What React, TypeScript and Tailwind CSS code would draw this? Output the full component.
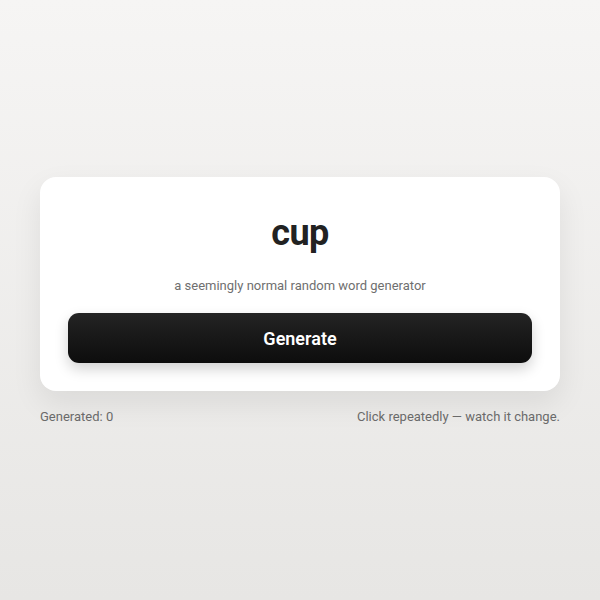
import React, { useState } from "react";

const WORDS = ["cup", "lamp", "river", "stone", "cloud", "apple", "chair", "window"];

export default function App() {
  const [count, setCount] = useState(0);
  const [word, setWord] = useState("cup");
  return (
    <div
      className="min-h-screen w-full flex items-center justify-center pt-[2px] bg-gradient-to-b from-[#f6f5f4] to-[#e7e6e4]"
      style={{ fontFamily: "Roboto, 'Noto Sans', sans-serif" }}
    >
      <div className="w-[520px] flex flex-col">
        <div className="bg-white rounded-[16px] px-[28px] pt-[36px] pb-[28px] flex flex-col items-center shadow-[0_12px_30px_rgba(0,0,0,0.08)]">
          <h1 className="text-[36px] leading-[40px] font-bold text-[#222222] tracking-[-0.5px]">{word}</h1>
          <p className="mt-[23px] text-[13px] leading-[20px] text-[#6f6f6f]">a seemingly normal random word generator</p>
          <button
            onClick={() => {
              setCount(count + 1);
              setWord(WORDS[(count + 1) % WORDS.length]);
            }}
            className="mt-[17px] w-full h-[50px] pt-[1px] rounded-[11px] bg-gradient-to-b from-[#242424] to-[#0d0d0d] text-white text-[18px] font-semibold shadow-[0_6px_14px_rgba(0,0,0,0.18)]"
          >
            Generate
          </button>
        </div>
        <div className="mt-[17px] flex justify-between text-[13px] leading-[18px] text-[#6a6a6a]">
          <span>Generated: {count}</span>
          <span>Click repeatedly — watch it change.</span>
        </div>
      </div>
    </div>
  );
}
